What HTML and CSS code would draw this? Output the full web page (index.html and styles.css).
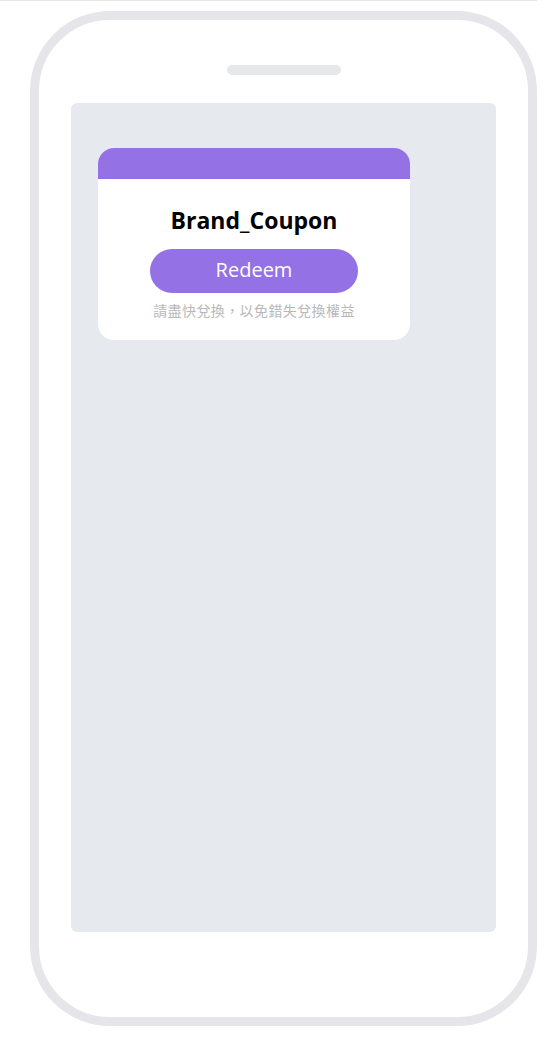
FILE: index.html
```html
<!DOCTYPE html>
<html lang="zh-Hant">
<head>
<meta charset="utf-8">
<title>Brand Coupon</title>
<link rel="stylesheet" href="styles.css">
</head>
<body>
<div class="page">
  <div class="phone">
    <div class="speaker"></div>
    <div class="screen">
      <div class="card">
        <div class="card-head"></div>
        <div class="card-body">
          <div class="title">Brand_Coupon</div>
          <button class="redeem">Redeem</button>
          <div class="hint">請盡快兌換，以免錯失兌換權益</div>
        </div>
      </div>
    </div>
  </div>
</div>
</body>
</html>
```

FILE: styles.css
```css
* { box-sizing: border-box; }
html, body { margin: 0; padding: 0; background: #ffffff; }
body { font-family: "Open Sans", "Noto Sans CJK TC", sans-serif; }

.page {
  width: 537px;
  border-top: 1px solid #e6e7eb;
  padding: 10px 0 0 30px;
}

.phone {
  width: 507px;
  height: 1015px;
  border: 9px solid #e6e6ea;
  border-radius: 80px;
  display: flex;
  flex-direction: column;
  align-items: center;
}

.speaker {
  margin-top: 45px;
  width: 114px;
  height: 10px;
  border-radius: 5px;
  background: #e6e8ec;
}

.screen {
  margin-top: 28px;
  width: 425px;
  height: 829px;
  border-radius: 6px;
  background: #e6e9ee;
  padding: 45px 0 0 27px;
}

.card {
  width: 312px;
  height: 192px;
  background: #ffffff;
  border-radius: 16px;
  overflow: hidden;
}

.card-head {
  height: 31px;
  background: #9471e5;
}

.card-body {
  padding-top: 26px;
  display: flex;
  flex-direction: column;
  align-items: center;
}

.title {
  font-family: "Open Sans", "Noto Sans", sans-serif;
  font-size: 23px;
  line-height: 30px;
  font-weight: 700;
  color: #000000;
}

.redeem {
  margin-top: 14px;
  width: 208px;
  height: 44px;
  border: none;
  border-radius: 22px;
  background: #9471e5;
  color: #ffffff;
  font-family: "Open Sans", sans-serif;
  font-size: 20px;
  line-height: 42px;
  padding: 0 0 2px;
}

.hint {
  margin-top: 7px;
  font-family: "Noto Sans CJK TC", sans-serif;
  font-size: 14px;
  line-height: 20px;
  letter-spacing: 0.4px;
  color: #b8b8b8;
}
```
